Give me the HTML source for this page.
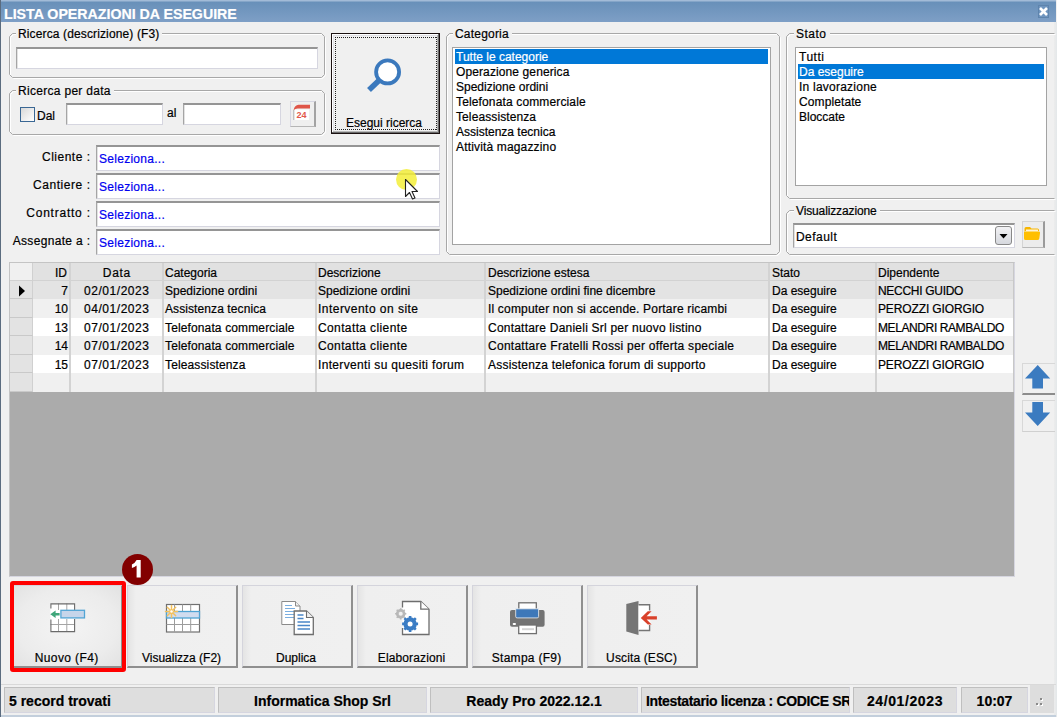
<!DOCTYPE html>
<html><head><meta charset="utf-8">
<style>
*{box-sizing:border-box;margin:0;padding:0}
html,body{width:1057px;height:717px;overflow:hidden;background:#f0f0f0}
body{position:relative;font-family:"Liberation Sans",sans-serif;font-size:12px;color:#000;-webkit-text-stroke:0.2px currentColor}
.a{position:absolute}
.t{position:absolute;white-space:nowrap;line-height:14px}
.grp{position:absolute;border:1px solid #a9a9a9;border-radius:3px;box-shadow:inset 1px 1px 0 #fff,1px 1px 0 #fff}
.glbl{position:absolute;background:#f0f0f0;padding:0 3px 0 2px;line-height:14px;white-space:nowrap}
.inp{position:absolute;background:#fff;border:1px solid #a5a5a5;border-top:2px solid #959595;border-right-color:#d6d6e0;border-bottom-color:#d6d6e0;box-shadow:inset 1px 0 0 #e2e2e2}
.lst{position:absolute;background:#fff;border:1px solid #a3a3a3}
.li{position:absolute;left:2px;height:15px;line-height:16px;white-space:nowrap;padding-left:1px}
.sel{background:#0078d7;color:#fff}
.btn{background:linear-gradient(90deg,#e4e4e4 0,#efefef 8px,#f0f0f0 100%);border-top:1px solid #d4d4dc;border-left:1px solid #d4d4dc;border-right:2px solid #8f8f8f;border-bottom:2px solid #8f8f8f}
.sp{background:#dedede;border:1px solid #bfbfbf;border-right-color:#d6d6e0;border-bottom-color:#d6d6e0}
.st{position:absolute;white-space:nowrap;font-weight:bold;font-size:14px;line-height:16px}
</style></head><body>
<!-- window borders -->
<div class="a" style="left:0;top:0;width:1px;height:717px;background:#5b6c7f"></div>
<div class="a" style="left:1054px;top:22px;width:3px;height:695px;background:linear-gradient(90deg,#ececec,#e4e8ea)"></div>
<!-- title bar -->
<div class="a" style="left:1px;top:0;width:1055px;height:22px;background:linear-gradient(#a2bbd7 0,#a2bbd7 1px,#6890b9 2px,#7e9fc6 100%)"></div>
<div class="t" style="left:4px;top:6px;font-size:14.2px;line-height:17px;font-weight:bold;color:#fff">LISTA OPERAZIONI DA ESEGUIRE</div>
<div class="a" style="left:1038px;top:5px;width:11px;height:13px;background:#6f95bf;border:1px solid #5e84ad"></div>
<svg class="a" style="left:1038px;top:6px" width="11" height="11" viewBox="0 0 11 11"><path d="M2 2L9 9M9 2L2 9" stroke="#fff" stroke-width="2.6"/></svg>

<!-- Ricerca descrizione -->
<svg class="a" style="left:9px;top:33px" width="318" height="47"><path d="M1.5 4.5L4.5 1.5H313.5L316.5 4.5V42.5L313.5 45.5H4.5L1.5 42.5Z" fill="none" stroke="#fff" stroke-width="1"/><path d="M0.5 3.5L3.5 0.5H312.5L315.5 3.5V41.5L312.5 44.5H3.5L0.5 41.5Z" fill="none" stroke="#a8a8a8" stroke-width="1"/></svg>
<div class="glbl" style="left:16px;top:27px;letter-spacing:0.13px">Ricerca (descrizione) (F3)</div>
<div class="inp" style="left:16px;top:47px;width:302px;height:22px"></div>

<!-- Ricerca per data -->
<svg class="a" style="left:9px;top:90px" width="318" height="47"><path d="M1.5 4.5L4.5 1.5H313.5L316.5 4.5V42.5L313.5 45.5H4.5L1.5 42.5Z" fill="none" stroke="#fff" stroke-width="1"/><path d="M0.5 3.5L3.5 0.5H312.5L315.5 3.5V41.5L312.5 44.5H3.5L0.5 41.5Z" fill="none" stroke="#a8a8a8" stroke-width="1"/></svg>
<div class="glbl" style="left:16px;top:84px;letter-spacing:0.3px">Ricerca per data</div>
<div class="a" style="left:20px;top:107px;width:15px;height:15px;border:1px solid #3a6794;background:linear-gradient(135deg,#d8d8d8,#fff)"></div>
<div class="t" style="left:37px;top:109px">Dal</div>
<div class="inp" style="left:66px;top:103px;width:97px;height:22px"></div>
<div class="t" style="left:167px;top:106px">al</div>
<div class="inp" style="left:183px;top:103px;width:98px;height:22px"></div>
<div class="a" style="left:290px;top:101px;width:26px;height:26px;background:#efefef;border-top:1px solid #d6d6e2;border-left:1px solid #d6d6e2;border-right:2px solid #a3a3a3;border-bottom:1px solid #b5b5b5"></div>
<svg class="a" style="left:290px;top:101px" width="26" height="26" viewBox="0 0 26 26"><path d="M3.8 8.5H19V19H3.8Z" fill="#fff"/><path d="M3.8 9V19" stroke="#9a9a9a" stroke-width="0.8"/><path d="M3.5 9.2Q4.8 4 8.5 3.8H20V7.6H7.8Q5.2 7.6 3.5 9.2Z" fill="#df5549"/><text x="11.4" y="17" font-size="9" font-weight="bold" text-anchor="middle" fill="#e2584c" font-family="Liberation Sans">24</text></svg>
<!-- Esegui ricerca button -->
<div class="a" style="left:331px;top:33px;width:109px;height:101px;border:1px solid #1a1010;box-shadow:inset -1px -1px 0 #6a6a6a, inset 1px 1px 0 #fff, inset -2px -2px 0 #b8b8b8, inset 2px 2px 0 #e0e0e6;background:#f0f0f0"></div>
<div class="a" style="left:335px;top:37px;width:102px;height:1px;background:repeating-linear-gradient(90deg,#222 0 1px,transparent 1px 2px)"></div>
<div class="a" style="left:335px;top:129px;width:102px;height:1px;background:repeating-linear-gradient(90deg,#222 0 1px,transparent 1px 2px)"></div>
<div class="a" style="left:335px;top:37px;width:1px;height:93px;background:repeating-linear-gradient(180deg,#222 0 1px,transparent 1px 2px)"></div>
<div class="a" style="left:436px;top:37px;width:1px;height:93px;background:repeating-linear-gradient(180deg,#222 0 1px,transparent 1px 2px)"></div>
<svg class="a" style="left:364px;top:56px" width="40" height="40" viewBox="0 0 40 40"><path d="M16.8 22.8L5 34" stroke="#3b79bd" stroke-width="5.6"/><circle cx="23.6" cy="15.9" r="11.5" fill="#fff" stroke="#3b79bd" stroke-width="3.8"/></svg>
<div class="t" style="left:346px;top:116px">Esegui ricerca</div>

<!-- Cliente etc -->
<div class="t" style="left:0;width:90.50px;text-align:right;top:150px;letter-spacing:0.5px">Cliente :</div>
<div class="t" style="left:0;width:90.55px;text-align:right;top:178px;letter-spacing:0.55px">Cantiere :</div>
<div class="t" style="left:0;width:90.77px;text-align:right;top:206px;letter-spacing:0.77px">Contratto :</div>
<div class="t" style="left:0;width:90.33px;text-align:right;top:234px;letter-spacing:0.33px">Assegnate a :</div>
<div class="inp" style="left:96px;top:145px;width:344px;height:26px"></div>
<div class="inp" style="left:96px;top:173px;width:344px;height:26px"></div>
<div class="inp" style="left:96px;top:201px;width:344px;height:26px"></div>
<div class="inp" style="left:96px;top:229px;width:344px;height:26px"></div>
<div class="t" style="left:99px;top:152px;color:#0000f0;letter-spacing:0.28px">Seleziona...</div>
<div class="t" style="left:99px;top:180px;color:#0000f0;letter-spacing:0.28px">Seleziona...</div>
<div class="t" style="left:99px;top:208px;color:#0000f0;letter-spacing:0.28px">Seleziona...</div>
<div class="t" style="left:99px;top:236px;color:#0000f0;letter-spacing:0.28px">Seleziona...</div>
<!-- cursor highlight -->
<div class="a" style="left:396px;top:169px;width:21px;height:21px;border-radius:50%;background:#f3ee3a;opacity:.85"></div>
<svg class="a" style="left:404px;top:178px" width="18" height="24" viewBox="0 0 18 24"><path d="M1.5 1.5V18.5L5.5 14.5L8.5 21L11 20L8 13.5H13.5Z" fill="#fff" stroke="#222" stroke-width="1.1" stroke-linejoin="round"/></svg>

<!-- Categoria -->
<svg class="a" style="left:446px;top:33px" width="336" height="224"><path d="M1.5 4.5L4.5 1.5H331.5L334.5 4.5V219.5L331.5 222.5H4.5L1.5 219.5Z" fill="none" stroke="#fff" stroke-width="1"/><path d="M0.5 3.5L3.5 0.5H330.5L333.5 3.5V218.5L330.5 221.5H3.5L0.5 218.5Z" fill="none" stroke="#a8a8a8" stroke-width="1"/></svg>
<div class="glbl" style="left:453px;top:27px;letter-spacing:0.2px">Categoria</div>
<div class="lst" style="left:452px;top:47px;width:319px;height:198px">
 <div class="li sel" style="top:1px;width:313px">Tutte le categorie</div>
 <div class="li" style="top:16px;letter-spacing:0.11px">Operazione generica</div>
 <div class="li" style="top:31px">Spedizione ordini</div>
 <div class="li" style="top:46px;letter-spacing:0.14px">Telefonata commerciale</div>
 <div class="li" style="top:61px;letter-spacing:0.1px">Teleassistenza</div>
 <div class="li" style="top:76px">Assistenza tecnica</div>
 <div class="li" style="top:91px;letter-spacing:0.16px">Attività magazzino</div>
</div>

<!-- Stato -->
<svg class="a" style="left:786px;top:33px" width="270" height="168"><path d="M269.5 1.5H4.5L1.5 4.5V163.5L4.5 166.5H269.5" fill="none" stroke="#fff" stroke-width="1"/><path d="M268.5 0.5H3.5L0.5 3.5V162.5L3.5 165.5H268.5" fill="none" stroke="#a8a8a8" stroke-width="1"/></svg>
<div class="glbl" style="left:794px;top:27px;letter-spacing:0.5px">Stato</div>
<div class="lst" style="left:795px;top:47px;width:252px;height:139px">
 <div class="li" style="top:1px;letter-spacing:0.5px">Tutti</div>
 <div class="li sel" style="top:16px;width:246px">Da eseguire</div>
 <div class="li" style="top:31px;letter-spacing:0.23px">In lavorazione</div>
 <div class="li" style="top:46px;letter-spacing:0.1px">Completate</div>
 <div class="li" style="top:61px">Bloccate</div>
</div>

<!-- Visualizzazione -->
<svg class="a" style="left:786px;top:210px" width="270" height="47"><path d="M269.5 1.5H4.5L1.5 4.5V42.5L4.5 45.5H269.5" fill="none" stroke="#fff" stroke-width="1"/><path d="M268.5 0.5H3.5L0.5 3.5V41.5L3.5 44.5H268.5" fill="none" stroke="#a8a8a8" stroke-width="1"/></svg>
<div class="glbl" style="left:794px;top:204px;letter-spacing:-0.13px">Visualizzazione</div>
<div class="inp" style="left:793px;top:223px;width:222px;height:25px"></div>
<div class="t" style="left:796px;top:230px;letter-spacing:0.45px">Default</div>
<div class="a" style="left:995px;top:226px;width:17px;height:19px;border:1px solid #888;border-radius:3px;background:linear-gradient(#f2f2f4,#d6d8de)"></div>
<svg class="a" style="left:998px;top:233px" width="11" height="7" viewBox="0 0 11 7"><path d="M1.5 1H9.5L5.5 5.5Z" fill="#000"/></svg>
<div class="a" style="left:1022px;top:221px;width:23px;height:27px;background:#ececec;border:1px solid #d4d4d4;border-right:2px solid #9a9a9a;border-bottom:1px solid #b8b8b8"></div>
<svg class="a" style="left:1023px;top:226px" width="18" height="15" viewBox="0 0 18 15"><path d="M1.5 2.5Q1.5 1 3 1H7L8.5 2.5H14.5Q16 2.5 16 4V5H1.5Z" fill="#f7b500"/><path d="M3 3.5H15V7H3Z" fill="#fff4d8"/><path d="M1 5.5H16Q17.3 5.5 17 7L16.3 12.5Q16 14 14.5 14H2.5Q1 14 1 12.5Z" fill="#ffbf00"/></svg>

<!-- GRID -->
<div class="a" style="left:9px;top:262px;width:1006px;height:315px;background:#ababab;border:1px solid #c4c4c4;border-right-color:#d6d6e0;border-bottom-color:#d6d6e0"></div>
<div class="a" style="left:33px;top:263px;width:980px;height:18px;background:#e1e1e1;border-bottom:1px solid #d2d2d2"></div>
<div class="a" style="left:10px;top:263px;width:23px;height:18px;background:#f0f0f0;border-right:1px solid #d0d0d0;border-bottom:1px solid #d0d0d0"></div>
<div class="a" style="left:33px;top:281px;width:980px;height:18px;background:#e3e3e3"></div>
<div class="a" style="left:10px;top:281px;width:23px;height:18px;background:#e3e3e3;border-right:1px solid #d0d0d0;border-bottom:1px solid #c9c9c9"></div>
<div class="a" style="left:33px;top:299px;width:980px;height:19px;background:#f0f0f0"></div>
<div class="a" style="left:10px;top:299px;width:23px;height:19px;background:#e3e3e3;border-right:1px solid #d0d0d0;border-bottom:1px solid #c9c9c9"></div>
<div class="a" style="left:33px;top:318px;width:980px;height:18px;background:#ffffff"></div>
<div class="a" style="left:10px;top:318px;width:23px;height:18px;background:#e3e3e3;border-right:1px solid #d0d0d0;border-bottom:1px solid #c9c9c9"></div>
<div class="a" style="left:33px;top:336px;width:980px;height:19px;background:#f0f0f0"></div>
<div class="a" style="left:10px;top:336px;width:23px;height:19px;background:#e3e3e3;border-right:1px solid #d0d0d0;border-bottom:1px solid #c9c9c9"></div>
<div class="a" style="left:33px;top:355px;width:980px;height:18px;background:#ffffff"></div>
<div class="a" style="left:10px;top:355px;width:23px;height:18px;background:#e3e3e3;border-right:1px solid #d0d0d0;border-bottom:1px solid #c9c9c9"></div>
<div class="a" style="left:33px;top:373px;width:980px;height:19px;background:#f0f0f0"></div>
<div class="a" style="left:10px;top:373px;width:23px;height:19px;background:#e3e3e3;border-right:1px solid #d0d0d0;border-bottom:1px solid #c9c9c9"></div>
<div class="a" style="left:69px;top:263px;width:2px;height:129px;background:#d3d3d3"></div>
<div class="a" style="left:162px;top:263px;width:2px;height:129px;background:#d3d3d3"></div>
<div class="a" style="left:315px;top:263px;width:2px;height:129px;background:#d3d3d3"></div>
<div class="a" style="left:484px;top:263px;width:2px;height:129px;background:#d3d3d3"></div>
<div class="a" style="left:768px;top:263px;width:2px;height:129px;background:#d3d3d3"></div>
<div class="a" style="left:875px;top:263px;width:2px;height:129px;background:#d3d3d3"></div>
<div class="a" style="left:1013px;top:263px;width:1px;height:129px;background:#c8c8c8"></div>
<div class="t" style="left:33px;width:34px;text-align:right;top:265px;line-height:17px">ID</div>
<div class="t" style="left:71px;width:91px;text-align:center;top:265px;line-height:17px;letter-spacing:0.7px;text-indent:0.7px">Data</div>
<div class="t" style="left:165px;top:265px;line-height:17px">Categoria</div>
<div class="t" style="left:318px;top:265px;line-height:17px">Descrizione</div>
<div class="t" style="left:488px;top:265px;line-height:17px">Descrizione estesa</div>
<div class="t" style="left:772px;top:265px;line-height:17px">Stato</div>
<div class="t" style="left:878px;top:265px;line-height:17px">Dipendente</div>
<div class="t" style="left:33px;width:35px;text-align:right;top:282px;line-height:18px">7</div>
<div class="t" style="left:71px;width:91px;text-align:center;top:282px;line-height:18px;letter-spacing:0.55px;text-indent:0.55px">02/01/2023</div>
<div class="t" style="left:165px;top:282px;line-height:18px">Spedizione ordini</div>
<div class="t" style="left:318px;top:282px;line-height:18px">Spedizione ordini</div>
<div class="t" style="left:488px;top:282px;line-height:18px">Spedizione ordini fine dicembre</div>
<div class="t" style="left:772px;top:282px;line-height:18px">Da eseguire</div>
<div class="t" style="left:878px;top:282px;line-height:18px;letter-spacing:-0.3px">NECCHI GUIDO</div>
<div class="t" style="left:33px;width:35px;text-align:right;top:300px;line-height:18px">10</div>
<div class="t" style="left:71px;width:91px;text-align:center;top:300px;line-height:18px;letter-spacing:0.55px;text-indent:0.55px">04/01/2023</div>
<div class="t" style="left:165px;top:300px;line-height:18px;letter-spacing:0.09px">Assistenza tecnica</div>
<div class="t" style="left:318px;top:300px;line-height:18px;letter-spacing:0.47px">Intervento on site</div>
<div class="t" style="left:488px;top:300px;line-height:18px;letter-spacing:0.18px">Il computer non si accende. Portare ricambi</div>
<div class="t" style="left:772px;top:300px;line-height:18px">Da eseguire</div>
<div class="t" style="left:878px;top:300px;line-height:18px;letter-spacing:-0.13px">PEROZZI GIORGIO</div>
<div class="t" style="left:33px;width:35px;text-align:right;top:319px;line-height:18px">13</div>
<div class="t" style="left:71px;width:91px;text-align:center;top:319px;line-height:18px;letter-spacing:0.55px;text-indent:0.55px">07/01/2023</div>
<div class="t" style="left:165px;top:319px;line-height:18px;letter-spacing:0.13px">Telefonata commerciale</div>
<div class="t" style="left:318px;top:319px;line-height:18px;letter-spacing:0.38px">Contatta cliente</div>
<div class="t" style="left:488px;top:319px;line-height:18px;letter-spacing:0.22px">Contattare Danieli Srl per nuovo listino</div>
<div class="t" style="left:772px;top:319px;line-height:18px">Da eseguire</div>
<div class="t" style="left:878px;top:319px;line-height:18px;letter-spacing:-0.4px">MELANDRI RAMBALDO</div>
<div class="t" style="left:33px;width:35px;text-align:right;top:337px;line-height:18px">14</div>
<div class="t" style="left:71px;width:91px;text-align:center;top:337px;line-height:18px;letter-spacing:0.55px;text-indent:0.55px">07/01/2023</div>
<div class="t" style="left:165px;top:337px;line-height:18px;letter-spacing:0.13px">Telefonata commerciale</div>
<div class="t" style="left:318px;top:337px;line-height:18px;letter-spacing:0.38px">Contatta cliente</div>
<div class="t" style="left:488px;top:337px;line-height:18px;letter-spacing:0.27px">Contattare Fratelli Rossi per offerta speciale</div>
<div class="t" style="left:772px;top:337px;line-height:18px">Da eseguire</div>
<div class="t" style="left:878px;top:337px;line-height:18px;letter-spacing:-0.4px">MELANDRI RAMBALDO</div>
<div class="t" style="left:33px;width:35px;text-align:right;top:356px;line-height:18px">15</div>
<div class="t" style="left:71px;width:91px;text-align:center;top:356px;line-height:18px;letter-spacing:0.55px;text-indent:0.55px">07/01/2023</div>
<div class="t" style="left:165px;top:356px;line-height:18px;letter-spacing:0.13px">Teleassistenza</div>
<div class="t" style="left:318px;top:356px;line-height:18px;letter-spacing:0.33px">Interventi su quesiti forum</div>
<div class="t" style="left:488px;top:356px;line-height:18px;letter-spacing:0.21px">Assistenza telefonica forum di supporto</div>
<div class="t" style="left:772px;top:356px;line-height:18px">Da eseguire</div>
<div class="t" style="left:878px;top:356px;line-height:18px;letter-spacing:-0.13px">PEROZZI GIORGIO</div>
<svg class="a" style="left:18px;top:285px" width="8" height="12" viewBox="0 0 8 12"><path d="M1 0.5L7 6L1 11.5Z" fill="#000"/></svg>
<!-- arrows -->
<div class="a" style="left:1022px;top:363px;width:33px;height:32px;border-left:1px solid #d8d8d8;border-top:1px solid #d8d8d8;border-bottom:2px solid #8c8c8c"></div>
<svg class="a" style="left:1024px;top:364px" width="28" height="26" viewBox="0 0 28 26"><path d="M13.7 1L26.2 14.4H19V24.5H8.3V14.4H1Z" fill="#3b7bc0"/></svg>
<div class="a" style="left:1022px;top:400px;width:33px;height:32px;border-left:1px solid #d8d8d8;border-top:1px solid #d8d8d8;border-bottom:1px solid #d0d0d0"></div>
<svg class="a" style="left:1024px;top:401px" width="28" height="26" viewBox="0 0 28 26"><path d="M8.3 1H19V11.5H26.2L13.7 25L1 11.5H8.3Z" fill="#3b7bc0"/></svg>

<!-- buttons -->
<div class="btn a" style="left:12px;top:585px;width:111px;height:83px;background:radial-gradient(ellipse at 50% 50%,#f4f4f4 0%,#ececec 65%,#e2e2e2 100%)"></div>
<div class="btn a" style="left:127px;top:585px;width:111px;height:83px"></div>
<div class="btn a" style="left:242px;top:585px;width:111px;height:83px"></div>
<div class="btn a" style="left:357px;top:585px;width:111px;height:83px"></div>
<div class="btn a" style="left:472px;top:585px;width:111px;height:83px"></div>
<div class="btn a" style="left:587px;top:585px;width:111px;height:83px"></div>
<div class="t" style="left:11px;width:111px;text-align:center;top:651px;letter-spacing:0.4px;text-indent:0.4px">Nuovo (F4)</div>
<div class="t" style="left:126px;width:111px;text-align:center;top:651px">Visualizza (F2)</div>
<div class="t" style="left:241px;width:110px;text-align:center;top:651px">Duplica</div>
<div class="t" style="left:356px;width:111px;text-align:center;top:651px;letter-spacing:0.13px;text-indent:0.13px">Elaborazioni</div>
<div class="t" style="left:471px;width:111px;text-align:center;top:651px;letter-spacing:0.28px;text-indent:0.28px">Stampa (F9)</div>
<div class="t" style="left:586px;width:111px;text-align:center;top:651px;letter-spacing:0.13px;text-indent:0.13px">Uscita (ESC)</div>

<!-- Nuovo icon -->
<svg class="a" style="left:48px;top:601px" width="40" height="34" viewBox="0 0 40 34">
 <rect x="2.5" y="2.5" width="24.5" height="28.5" fill="#fff"/>
 <path d="M10.5 2.5V9M18.8 2.5V9M10.5 18V31M18.8 18V31M2.5 23.5H27" stroke="#a5a5a5" stroke-width="1"/>
 <path d="M2.9 7.5V2.9H26.6V9M26.6 18V30.6H2.9V18.5" fill="none" stroke="#6b6b6b" stroke-width="1.1"/>
 <rect x="12.9" y="9.3" width="23.6" height="7.6" fill="#c6d5ea" stroke="#52a5d5" stroke-width="1.3"/>
 <path d="M2.3 13.3L7.6 9.6V12H11.6V14.6H7.6V17Z" fill="#3fa67a"/>
</svg>
<!-- Visualizza icon -->
<svg class="a" style="left:163px;top:601px" width="40" height="34" viewBox="0 0 40 34">
 <rect x="3.5" y="3.5" width="33" height="27.5" fill="#fff" stroke="#707070" stroke-width="1.2"/>
 <path d="M11.5 3.5V31M19.5 3.5V31M27.7 3.5V31M3.5 23.5H36.5" stroke="#9c9c9c" stroke-width="1"/>
 <rect x="3.5" y="10.5" width="33" height="6.5" fill="#d0dcef" stroke="#4ea3d3" stroke-width="1.3"/>
 <g stroke="#f4c25e" stroke-width="1.5" stroke-linecap="round"><path d="M8.5 4.5V16.5M2.5 10.5H14.5M4.3 6.3L12.7 14.7M12.7 6.3L4.3 14.7"/></g>
 <circle cx="8.5" cy="10.5" r="1.2" fill="#fff"/>
</svg>
<!-- Duplica icon -->
<svg class="a" style="left:278px;top:598px" width="40" height="40" viewBox="0 0 40 40">
 <path d="M3.8 3.5H17.5L22 8V26.5H3.8Z" fill="#fff" stroke="#8a8a8a" stroke-width="1"/>
 <path d="M17.5 3.5V8H22" fill="#eee" stroke="#8a8a8a" stroke-width="1"/>
 <path d="M7 7.5H14M7 10.5H17M7 13.5H17M7 16.5H17M7 19.5H17" stroke="#7aaee0" stroke-width="1.1"/>
 <path d="M16.2 13H28.5L35.3 19.5V36.5H16.2Z" fill="#fff" stroke="#6e6e6e" stroke-width="1.3"/>
 <path d="M28.5 13V19.5H35.3" fill="#eee" stroke="#6e6e6e" stroke-width="1.1"/>
 <path d="M19.5 17H25.5M19.5 20.5H25.5M19.5 24H32M19.5 27.5H32M19.5 31H32" stroke="#4a86c8" stroke-width="1.3"/>
</svg>
<!-- Elaborazioni icon -->
<svg class="a" style="left:393px;top:598px" width="40" height="40" viewBox="0 0 40 40">
 <path d="M9.5 9.5V3.5H27.8L36 11.2V36.5H9.5V30" fill="#fff" stroke="#6e6e6e" stroke-width="1.3"/>
 <path d="M27.8 3.5V11.2H36" fill="#fff" stroke="#6e6e6e" stroke-width="1.3"/>
 <g transform="translate(7.7,15.8)"><circle r="3.6" fill="none" stroke="#b8b8b8" stroke-width="2.4"/><path d="M0 -5.6V5.6M-5.6 0H5.6M-4 -4L4 4M4 -4L-4 4" stroke="#b8b8b8" stroke-width="1.6"/><circle r="2" fill="#f0f0f0"/></g>
 <g transform="translate(17.1,25.9)"><circle r="5" fill="none" stroke="#3a7cc4" stroke-width="3.4"/><path d="M0 -8V8M-8 0H8M-5.7 -5.7L5.7 5.7M5.7 -5.7L-5.7 5.7" stroke="#3a7cc4" stroke-width="2.6"/><circle r="2.5" fill="#fff"/></g>
</svg>
<!-- Stampa icon -->
<svg class="a" style="left:508px;top:600px" width="40" height="36" viewBox="0 0 40 36">
 <rect x="10.8" y="2.8" width="17.5" height="9" fill="#fff" stroke="#707070" stroke-width="1.3"/>
 <rect x="2" y="10" width="34.6" height="16.7" rx="2" fill="#737373"/>
 <path d="M7.7 8.8H30.6V16.5Q30.6 17.9 29.2 17.9H9.1Q7.7 17.9 7.7 16.5Z" fill="#3e78b9" stroke="#f0f0f0" stroke-width="0.8"/>
 <rect x="4.7" y="23" width="3.3" height="2" rx="1" fill="#fff"/>
 <rect x="10.7" y="25" width="17.7" height="8.6" fill="#fff" stroke="#707070" stroke-width="1.3"/>
 <path d="M14 29.2H26" stroke="#d5d5d5" stroke-width="2"/>
</svg>
<!-- Uscita icon -->
<svg class="a" style="left:623px;top:599px" width="40" height="38" viewBox="0 0 40 38">
 <path d="M3.3 5.1L15.5 2V35.9L3.3 32.4Z" fill="#757575"/>
 <path d="M15.5 5.7H27.2V32.1H15.5Z" fill="#fff"/>
 <path d="M15.5 5.7H26.6V11.5M26.6 26V31.5H15.5" fill="none" stroke="#757575" stroke-width="1.4"/>
 <path d="M17.8 18.9L24.8 12.2H28.6L23.6 17.2H33.9V20.6H23.6L28.6 25.6H24.8Z" fill="#d9412b"/>
</svg>

<!-- red highlight + badge -->
<div class="a" style="left:10px;top:581px;width:116px;height:91px;border:4px solid #ff0000;border-radius:3px"></div>
<div class="a" style="left:122px;top:554px;width:31px;height:31px;border-radius:50%;background:#820000"></div>
<svg class="a" style="left:122px;top:554px" width="31" height="31" viewBox="0 0 31 31"><path d="M14.6 6H18.7V23.4H14.6V11.6Q12.6 13.3 9.9 14.1V10.4Q13.1 9.1 14.6 6Z" fill="#fff"/></svg>

<!-- status bar -->
<div class="a" style="left:1px;top:684px;width:1055px;height:1px;background:#d9d9d9"></div>
<div class="sp a" style="left:4px;top:687px;width:211px;height:26px"></div>
<div class="sp a" style="left:218px;top:687px;width:209px;height:26px"></div>
<div class="sp a" style="left:430px;top:687px;width:208px;height:26px"></div>
<div class="sp a" style="left:641px;top:687px;width:209px;height:26px"></div>
<div class="sp a" style="left:853px;top:687px;width:104px;height:26px"></div>
<div class="sp a" style="left:961px;top:687px;width:67px;height:26px"></div>
<div class="a" style="left:1030px;top:685px;width:24px;height:28px;background:#dddddd"></div>
<div class="st" style="left:9px;top:693px">5 record trovati</div>
<div class="st" style="left:218px;width:209px;text-align:center;top:693px">Informatica Shop Srl</div>
<div class="st" style="left:430px;width:208px;text-align:center;top:693px">Ready Pro 2022.12.1</div>
<div class="st" style="left:646px;width:203px;overflow:hidden;top:693px;letter-spacing:-0.35px">Intestatario licenza : CODICE SRL</div>
<div class="st" style="left:853px;width:104px;text-align:center;top:693px;letter-spacing:0.6px">24/01/2023</div>
<div class="st" style="left:961px;width:67px;text-align:center;top:693px">10:07</div>
<svg class="a" style="left:1034px;top:697px" width="12" height="12" viewBox="0 0 12 12"><g fill="#fff"><rect x="7" y="2" width="2" height="2"/><rect x="3" y="7" width="2" height="2"/><rect x="7" y="7" width="2" height="2"/></g><g fill="#8a8a8a"><rect x="6" y="1" width="2" height="2"/><rect x="2" y="6" width="2" height="2"/><rect x="6" y="6" width="2" height="2"/></g></svg>
<div class="a" style="left:1px;top:715px;width:1055px;height:2px;background:#c3cfdc"></div>

</body></html>
